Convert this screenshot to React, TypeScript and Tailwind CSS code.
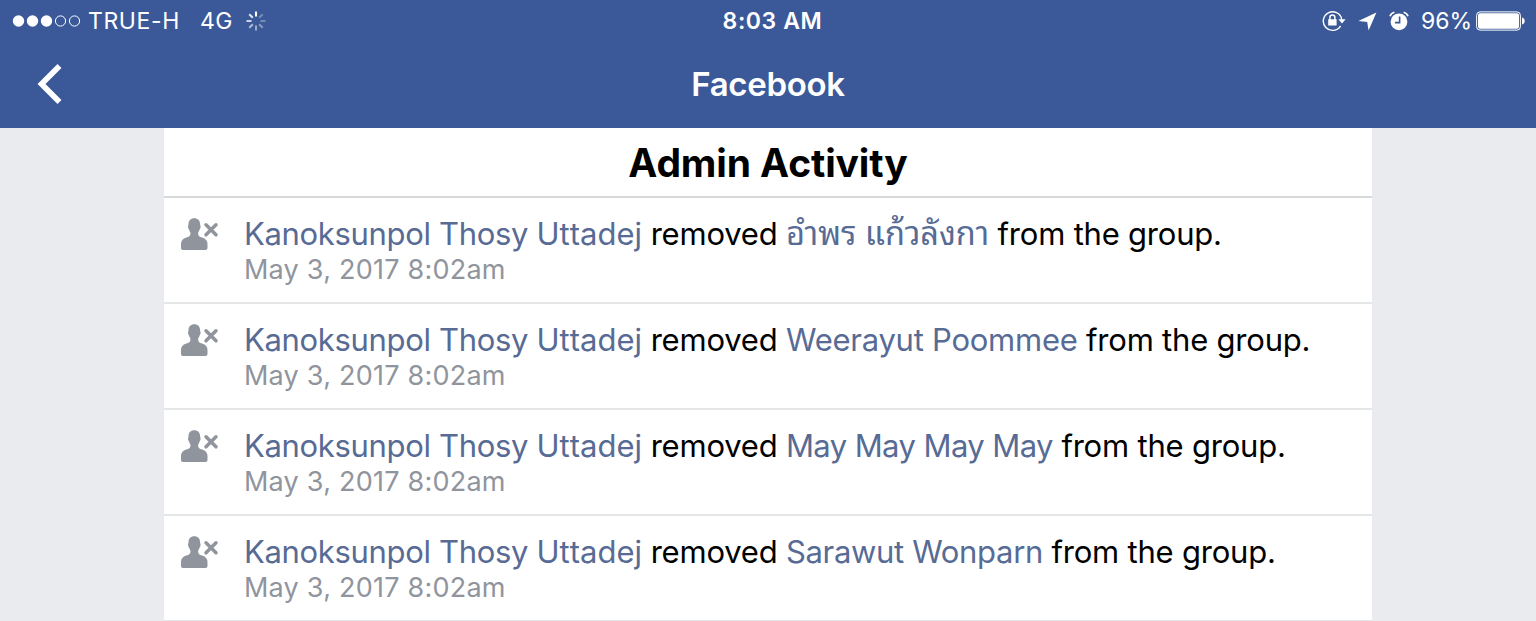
import type { ReactNode } from "react";

const admin = { given: "Kanoksunpol Thosy", family: "Uttadej" };

const activities = [
  {
    member: "อำพร แก้วลังกา",
    memberClass: "text-[32.5px] leading-[0] tracking-normal font-['Noto_Sans_Thai_Looped','Noto_Looped_Thai','Loma','Garuda','Waree','Noto_Serif_Thai',sans-serif]",
    date: "May 3, 2017 8:02am",
  },
  {
    member: "Weerayut Poommee",
    memberClass: "tracking-[-0.25px]",
    date: "May 3, 2017 8:02am",
  },
  {
    member: "May May May May",
    memberClass: "tracking-[-0.58px]",
    date: "May 3, 2017 8:02am",
  },
  {
    member: "Sarawut Wonparn",
    memberClass: "tracking-[-0.33px]",
    date: "May 3, 2017 8:02am",
  },
];

const spokes = [1, 0.3, 0.3, 0.4, 0.5, 0.6, 0.75, 0.85];

export default function App() {
  return (
    <div className="flex h-screen flex-col overflow-hidden bg-[#e9ebee] font-['Inter',sans-serif]">
      <header className="h-32 shrink-0 bg-[#3b5998] text-white">
        <StatusBar />
        <NavBar />
      </header>
      <main className="mx-auto w-[1208px] bg-white">
        <h1 className="flex h-[70px] items-center justify-center border-b-2 border-[#d8d9db] pt-0.5 text-[39px] font-bold tracking-[-0.12px] text-black">
          Admin Activity
        </h1>
        <ul>
          {activities.map((activity, index) => (
            <ActivityRow key={index} date={activity.date}>
              <Name className="tracking-[-0.33px] [font-kerning:none]">
                {admin.given} <span className="tracking-[0.05px]">{admin.family}</span>
              </Name>{" "}
              removed <Name className={activity.memberClass}>{activity.member}</Name> from the group.
            </ActivityRow>
          ))}
        </ul>
      </main>
    </div>
  );
}

function StatusBar() {
  return (
    <div className="grid h-[41px] grid-cols-3 items-center pl-3 pr-[11px] text-[23px] leading-[42px]">
      <div className="flex items-center">
        <SignalDots />
        <span className="ml-[7px] tracking-[0.6px]">TRUE-H</span>
        <span className="ml-5 tracking-[0.5px]">4G</span>
        <Spinner />
      </div>
      <div className="pl-2 text-center font-semibold tracking-[0.6px]">8:03 AM</div>
      <div className="flex items-center justify-end">
        <RotationLock />
        <LocationArrow />
        <AlarmClock />
        <span className="mr-0.5">96%</span>
        <Battery />
      </div>
    </div>
  );
}

function NavBar() {
  return (
    <nav className="grid h-[86px] grid-cols-[1fr_auto_1fr] items-center">
      <button aria-label="Back" className="ml-9 w-7">
        <svg width="28" height="42" viewBox="0 0 28 42" fill="none" stroke="white" strokeWidth="5.6">
          <path d="M23.5 3 5.5 21l18 18" />
        </svg>
      </button>
      <span className="pt-0.5 text-[33px] font-semibold tracking-[-0.3px]">Facebook</span>
    </nav>
  );
}

function ActivityRow({ date, children }: { date: string; children: ReactNode }) {
  return (
    <li className="flex h-[106px] border-b-2 border-[#e5e6e8] pl-4 pt-[18px]">
      <RemovedUser />
      <div className="ml-6 whitespace-nowrap">
        <p className="h-9 text-[31px] leading-9 tracking-[-0.21px] text-black">{children}</p>
        <p className="text-[27px] leading-9 tracking-[0.23px] text-[#90949c]">{date}</p>
      </div>
    </li>
  );
}

function Name({ className, children }: { className: string; children: ReactNode }) {
  return <span className={`text-[#576b95] ${className}`}>{children}</span>;
}

function SignalDots() {
  return (
    <svg width="69" height="14" viewBox="0 0 69 14" fill="white">
      <circle cx="6.5" cy="7" r="5.7" />
      <circle cx="20.5" cy="7" r="5.7" />
      <circle cx="34.5" cy="7" r="5.7" />
      <circle cx="48.5" cy="7" r="5.1" fill="none" stroke="white" />
      <circle cx="62.5" cy="7" r="5.1" fill="none" stroke="white" />
    </svg>
  );
}

function Spinner() {
  return (
    <svg className="ml-[13px]" width="20" height="20" viewBox="0 0 20 20" stroke="white" strokeWidth="2">
      {spokes.map((opacity, i) => (
        <path key={i} d="M10 0.5v5" opacity={opacity} transform={`rotate(${i * 45} 10 10)`} />
      ))}
    </svg>
  );
}

function RotationLock() {
  return (
    <svg width="24" height="22" viewBox="0 0 24 22" fill="none" stroke="white">
      <path strokeWidth="1.4" d="M18.6 15.8A9.3 9.3 0 1 1 19.7 9.3" />
      <path fill="white" stroke="none" d="M16.4 9.3h7.2L20 13.5zM6.2 9.3h8.4v6.2H6.2z" />
      <path strokeWidth="1.5" d="M7.9 10V7.4a2.5 2.5 0 0 1 5 0V10" />
    </svg>
  );
}

function LocationArrow() {
  return (
    <svg className="ml-3" width="19" height="19" viewBox="0 0 19 19" fill="white">
      <path d="M18.4.4 10.6 18.4 9.2 10 .4 9z" />
    </svg>
  );
}

function AlarmClock() {
  return (
    <svg className="ml-3 mr-3" width="20" height="20" viewBox="0 0 20 20" fill="none">
      <circle cx="10" cy="10.8" r="8.4" fill="white" />
      <path stroke="#3b5998" strokeWidth="1.6" d="M10.6 5.4v6.2H6" />
      <path stroke="white" strokeWidth="1.6" d="M1 5.3C1.6 3.2 3 1.8 5.4 1.2M19 5.3c-.6-2.1-2-3.5-4.4-4.1" />
    </svg>
  );
}

function Battery() {
  return (
    <svg className="ml-0.5" width="49" height="20" viewBox="0 0 49 20" fill="white">
      <rect x="0.6" y="0.9" width="43.8" height="18.2" rx="3.4" fill="none" stroke="white" />
      <rect x="2" y="2.3" width="41" height="15.4" rx="2" />
      <path d="M46 6.5c3.6.8 3.6 6.2 0 7z" />
    </svg>
  );
}

function RemovedUser() {
  return (
    <svg className="mt-0.5 shrink-0" width="40" height="32" viewBox="0 0 40 32" fill="#90949c">
      <path d="M14.3.2c3.5 0 5.8 2.2 5.8 6 0 1.2.5 1.2.5 2.6 0 1.6-.8 1.9-1.2 3.2-.4 1.4-1.3 2-1.3 3.5 0 2.6 1.5 3.2 4 4 3.6 1.2 5.4 3.2 5.4 6.5v4c0 1.3-.8 2-2 2H3c-1.3 0-2-.7-2-2v-4c0-3.3 1.7-5.3 5.3-6.5 2.5-.8 4.2-1.4 4.2-4 0-1.5-.9-2.1-1.3-3.5C8.8 10.7 8 10.4 8 8.8c0-1.4.5-1.4.5-2.6 0-3.8 2.3-6 5.8-6z" />
      <path fill="none" stroke="#90949c" strokeWidth="3.5" strokeLinecap="round" d="m26 6.8 10 10M36 6.8l-10 10" />
    </svg>
  );
}
